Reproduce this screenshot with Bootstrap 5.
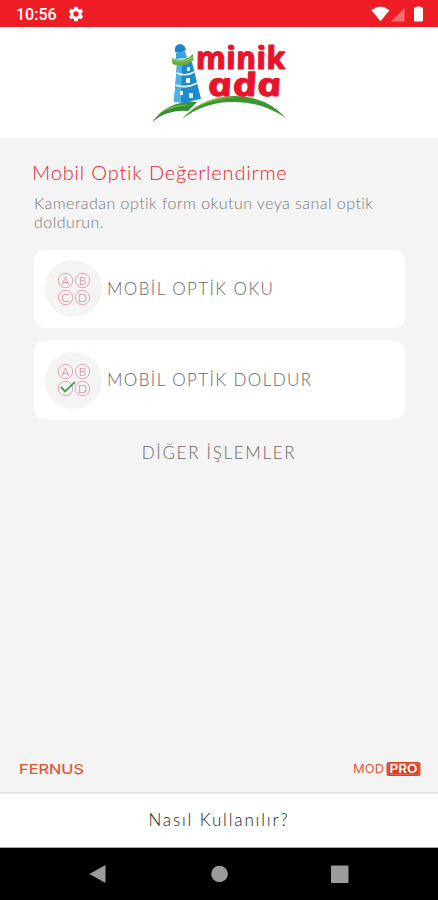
<!DOCTYPE html>
<html lang="tr">
<head>
<meta charset="utf-8">
<meta name="viewport" content="width=device-width, initial-scale=1">
<title>Minik Ada</title>
<link href="https://cdn.jsdelivr.net/npm/bootstrap@5.3.0/dist/css/bootstrap.min.css" rel="stylesheet">
<style>
body{font-family:Lato,"Open Sans",sans-serif;font-weight:300;font-variant-ligatures:none;background:#f4f4f4;height:900px;overflow:hidden}
svg{display:block;flex:none}
.statusbar{height:27px;background:#ee1d25;padding:0 14px 0 16px}
.clock{font:500 16px/27px Roboto,sans-serif;width:41px;white-space:nowrap;padding-top:2px}
.gear{margin-left:11px}
.brand{height:111px}
.intro{padding:22px 32px 0}
.heading{font-size:20px;line-height:24px;font-weight:300;color:#e6242c;letter-spacing:.82px;margin:0 0 10px;white-space:nowrap}
.hint{font-size:16px;line-height:18.5px;color:#777;letter-spacing:.46px;margin:0 0 18.5px 2px;white-space:nowrap}
.choice{height:78px;margin:0 1px 13.5px 2px;border-radius:11px;padding:0 11px}
.disc{width:57px;height:57px;background:#f4f4f4}
.label{font-size:17px;color:#666;letter-spacing:1.4px;margin-left:5px;white-space:nowrap;line-height:24px}
.more{color:#666;font-size:17px;letter-spacing:1.7px;line-height:24px;margin-top:22px}
.logos{padding:0 17px 15px 19px}
.howto{height:56px;border-top:2px solid #e6e6e6;border-bottom:1px solid #aaa;font-size:17px;color:#222;letter-spacing:1.85px;padding-bottom:2px}
.navkeys{height:52px;background:#000}
</style>
<script src="https://cdn.jsdelivr.net/npm/bootstrap@5.3.0/dist/js/bootstrap.bundle.min.js"></script>
</head>
<body class="d-flex flex-column">
<header class="statusbar d-flex align-items-center text-white">
  <div class="clock">10:56</div>
  <svg class="gear" width="16" height="16" viewBox="0 0 24 24" fill="#fff"><path fill-rule="evenodd" d="M9.500 1h5l.6 3.200 2 1.200 3.100-1.100 2.500 4.300-2.500 2.200v2.400l2.500 2.200-2.500 4.300-3.100-1.100-2 1.200-.6 3.200h-5l-.6-3.200-2-1.200-3.100 1.100-2.500-4.300 2.500-2.200v-2.400L1.300 8.600l2.500-4.300 3.100 1.100 2-1.200zM12 8a4 4 0 1 0 0 8 4 4 0 0 0 0-8z"/></svg>
  <svg class="ms-auto" width="54" height="18" viewBox="0 0 54 18" fill="#fff"><path d="M1.500 5.200Q10.500-2 19.500 5.200L10.500 16.200z"/><path d="M34.500 3v13.500H21z" opacity=".35"/><path d="M44.500 2.500h2V1.500h4v1h2q.5 0 .5 1v12q0 1-1 1h-7q-1 0-1-1v-12q0-1 .5-1z"/></svg>
</header>
<section class="brand bg-white d-flex justify-content-center">
  <svg width="150" height="95" viewBox="0 0 150 95" class="mt-2">
    <path d="M8 87Q25 65 53 67L44 76Q24 74 8 87z" fill="#37902f"/>
    <path d="M13 80Q28 67 48 70Q27 71 13 80z" fill="#72b843"/>
    <path d="M38 84Q58 62 90 61Q122 61 142 83Q118 67 91 67Q62 66 38 84z" fill="#3d972f"/>
    <path d="M44 77Q65 61 91 62Q65 64 44 77z" fill="#79bd43"/>
    <path d="M31 17Q30 11 34 9.500Q38 8 41 12L42 15L36 18z" fill="#1687cf"/>
    <path d="M32 18L41 16L43 23L32 24z" fill="#3ba3dc"/>
    <path d="M33 29L48 27L57 64Q49 65 43 68L30 67z" fill="#1c8ace"/>
    <path d="M33 29L38 29L37 67L30 67z" fill="#4db2e6"/>
    <path d="M32.500 38Q42 42 50 37M31.500 50Q42 54 53.500 48" stroke="#fff" stroke-width="1.600" fill="none"/>
    <path d="M43 32h3v4h-3zM42 43h4v5h-4zM36 56h3v4h-3zM45 58h4v5h-4z" fill="#e8f7ff"/>
    <path d="M28 23Q39 28 49 19L49.500 25Q40 34 28.500 29z" fill="#66ab3b"/>
    <path d="M29 24.500Q39 29 49 22" stroke="#a5d27c" stroke-width="1" fill="none"/>
    <g fill="#e9142b" stroke="#e9142b" stroke-width="1" stroke-linejoin="round" font-family="Open Sans,sans-serif" font-weight="700" font-style="italic">
      <text transform="translate(53.500 33.500) skewX(12)" x="0" y="0" font-size="31.500" textLength="89.500" lengthAdjust="spacingAndGlyphs">minik</text>
      <text transform="translate(65.500 61) skewX(12)" x="0" y="0" font-size="32" textLength="74" lengthAdjust="spacingAndGlyphs">ada</text>
    </g>
  </svg>
</section>
<main class="intro flex-grow-1">
  <h1 class="heading">Mobil Optik Değerlendirme</h1>
  <p class="hint">Kameradan optik form okutun veya sanal optik<br>doldurun.</p>
  <div class="choice bg-white d-flex align-items-center">
    <div class="disc rounded-circle d-flex align-items-center justify-content-center">
      <svg width="34" height="34" viewBox="0 0 34 34" fill="none" stroke="#e4a4ae"><circle cx="8.500" cy="8.500" r="7.200"/><circle cx="25.500" cy="8.500" r="7.200"/><circle cx="8.500" cy="25.500" r="7.200"/><circle cx="25.500" cy="25.500" r="7.200"/><g fill="#d8707f" stroke="none" font-size="12" text-anchor="middle"><text x="8.500" y="12.800">A</text><text x="25.500" y="12.800">B</text><text x="8.500" y="29.800">C</text><text x="25.500" y="29.800">D</text></g></svg>
    </div>
    <span class="label">MOBİL OPTİK OKU</span>
  </div>
  <div class="choice bg-white d-flex align-items-center">
    <div class="disc rounded-circle d-flex align-items-center justify-content-center">
      <svg width="34" height="34" viewBox="0 0 34 34" fill="none" stroke="#e4a4ae"><circle cx="8.500" cy="8.500" r="7.200"/><circle cx="25.500" cy="8.500" r="7.200"/><circle cx="8.500" cy="25.500" r="7.200"/><circle cx="25.500" cy="25.500" r="7.200"/><g fill="#d8707f" stroke="none" font-size="12" text-anchor="middle"><text x="8.500" y="12.800">A</text><text x="25.500" y="12.800">B</text><text x="25.500" y="29.800">D</text></g><path d="M4 24l4 4.500L18 19" stroke="#45a455" stroke-width="1.900"/></svg>
    </div>
    <span class="label">MOBİL OPTİK DOLDUR</span>
  </div>
  <div class="more text-center">DİĞER İŞLEMLER</div>
</main>
<div class="logos d-flex justify-content-between align-items-center">
  <svg width="66" height="16" viewBox="0 0 66 16"><text x="0" y="12.500" font-family="Inter,sans-serif" font-size="13.500" font-weight="400" fill="#e2532f" stroke="#e2532f" stroke-width=".2" textLength="65" lengthAdjust="spacingAndGlyphs">FERNUS</text></svg>
  <svg width="69" height="16" viewBox="0 0 69 16" font-family="Inter,sans-serif"><text x="1" y="12.300" font-size="12" font-weight="400" fill="#de5b42" textLength="31" lengthAdjust="spacingAndGlyphs">MOD</text><rect x="34.500" y="1" width="34" height="14" rx="2.500" fill="#da3e24"/><rect x="36" y="2.500" width="31" height="11" rx="1.500" fill="none" stroke="#ef9b88" stroke-width=".5"/><text x="37.500" y="12.300" font-size="12" font-weight="600" fill="#fff" textLength="28" lengthAdjust="spacingAndGlyphs">PRO</text></svg>
</div>
<div class="howto bg-white d-flex align-items-center justify-content-center">Nasıl Kullanılır?</div>
<nav class="navkeys d-flex justify-content-center">
  <svg width="260" height="52" viewBox="0 0 260 52" fill="#9c9c9c"><path d="M.5 26L16.500 17v18z"/><circle cx="130.500" cy="26" r="8.300"/><rect x="242" y="17.500" width="17.500" height="17.500" rx="1"/></svg>
</nav>
</body>
</html>
